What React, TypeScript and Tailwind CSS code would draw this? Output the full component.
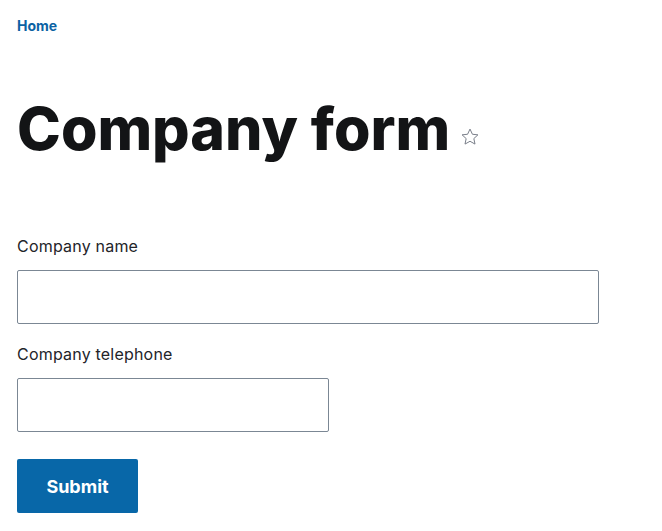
export default function App() {
  return (
    <div className="min-h-[531px] bg-white px-[17px] pt-[13px]" style={{ fontFamily: '"Inter", "Liberation Sans", sans-serif' }}>
      <nav>
        <a href="#" className="text-[14px] font-bold text-[#0b62a3] leading-[18px]">Home</a>
      </nav>
      <div className="mt-[52px] flex items-end">
        <h1 className="text-[59px] font-extrabold leading-[80px] text-[#131416]">Company form</h1>
        <svg className="ml-[10px] mb-[22px]" width="20" height="20" viewBox="0 0 24 24" fill="none" stroke="#7a7f8a" strokeWidth="1.2" strokeLinejoin="round">
          <path d="M12 2.5l2.9 6.2 6.6.7-4.9 4.5 1.4 6.6L12 17.1l-6 3.4 1.4-6.6-4.9-4.5 6.6-.7z" />
        </svg>
      </div>
      <form className="mt-[67px]">
        <div>
          <label className="block text-[16px] tracking-[0.2px] text-[#232429] leading-[20px]">Company name</label>
          <input type="text" className="mt-[14px] block h-[54px] w-[582px] rounded-[2px] border border-[#7b8794] bg-white" />
        </div>
        <div className="mt-[20px]">
          <label className="block text-[16px] tracking-[0.2px] text-[#232429] leading-[20px]">Company telephone</label>
          <input type="tel" className="mt-[14px] block h-[54px] w-[312px] rounded-[2px] border border-[#7b8794] bg-white" />
        </div>
        <button type="button" className="mt-[27px] h-[54px] w-[121px] rounded-[2px] bg-[#0867a8] text-[18px] font-bold text-white">Submit</button>
      </form>
    </div>
  );
}
